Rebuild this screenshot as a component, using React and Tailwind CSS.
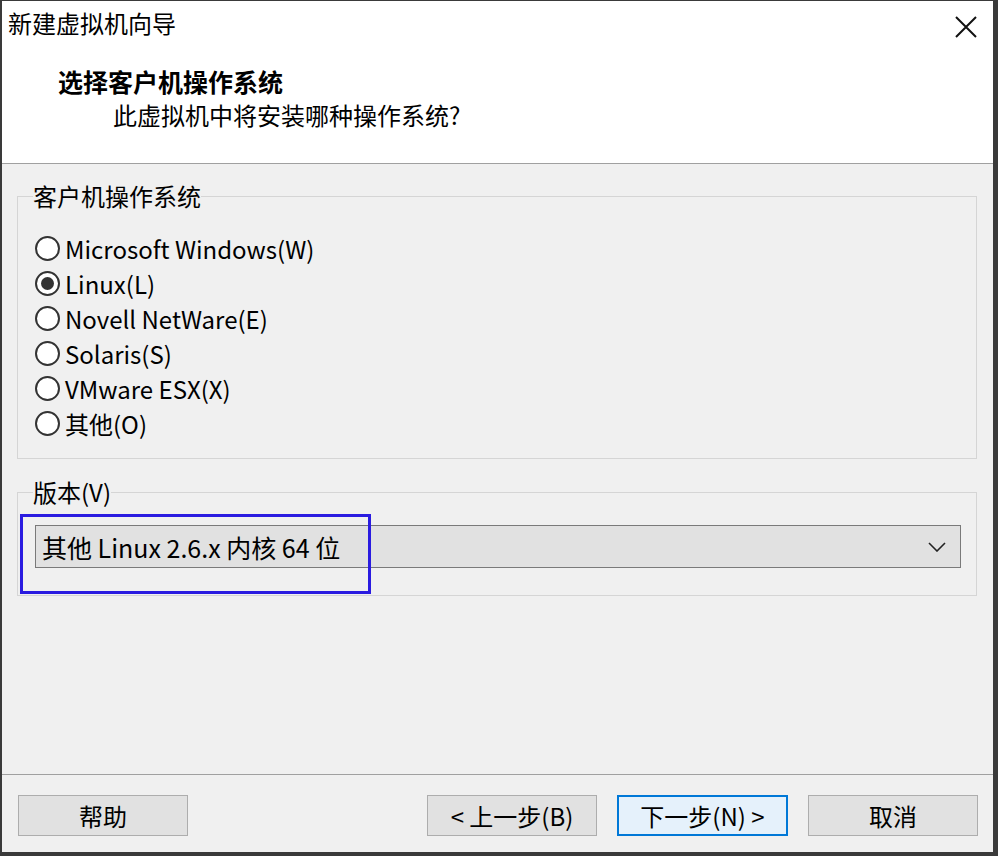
import React from 'react';

const osList = [
  { label: 'Microsoft Windows(W)', checked: false },
  { label: 'Linux(L)', checked: true },
  { label: 'Novell NetWare(E)', checked: false },
  { label: 'Solaris(S)', checked: false },
  { label: 'VMware ESX(X)', checked: false },
  { label: '其他(O)', checked: false },
];

function Radio({ checked }) {
  return (
    <span className="w-[25px] h-[25px] rounded-full border-2 border-[#333] bg-white flex items-center justify-center shrink-0">
      {checked && <span className="w-[13px] h-[13px] rounded-full bg-[#333]" />}
    </span>
  );
}

function Button({ children, isDefault }) {
  return (
    <button
      className={
        isDefault
          ? 'h-[41px] w-[171px] bg-[#e5f1fb] border-2 border-[#0078d7] text-[24px] leading-[30px] text-black'
          : 'h-[41px] w-[170px] bg-[#e1e1e1] border border-[#adadad] text-[24px] leading-[30px] text-black'
      }
    >
      {children}
    </button>
  );
}

export default function App() {
  return (
    <div className="w-[998px] h-[856px] flex flex-col bg-[#f0f0f0] border-l-2 border-r-[5px] border-b-4 border-t border-[#3a3a3a] font-['Noto_Sans_CJK_SC',sans-serif] text-black relative overflow-hidden">
      {/* Header */}
      <div className="h-[163px] bg-white border-b border-[#a0a0a0] shrink-0">
        <div className="flex items-start justify-between pl-[6px] pr-[16px] pt-[7px]">
          <span className="text-[24px] leading-[30px]">新建虚拟机向导</span>
          <svg width="22" height="22" viewBox="0 0 22 22" className="mt-[8px]">
            <path d="M1 1 L21 21 M21 1 L1 21" stroke="#111" strokeWidth="2" fill="none" />
          </svg>
        </div>
        <div className="pl-[56px] pt-[27px] text-[25px] leading-[32px] font-bold">选择客户机操作系统</div>
        <div className="pl-[111px] pt-[3px] text-[24px] leading-[30px]">此虚拟机中将安装哪种操作系统?</div>
      </div>

      {/* Content */}
      <div className="flex-1 pl-[15px] pr-[16px] pt-[17px]">
        <fieldset className="border border-[#d5d5d5] pl-[17px] pr-[16px] pb-[17px]">
          <legend className="px-0 -ml-[2px] text-[24px] leading-[30px]">客户机操作系统</legend>
          <div className="pt-[20px] flex flex-col">
            {osList.map((os) => (
              <label key={os.label} className="h-[35px] flex items-center gap-[5px] text-[24px] leading-[30px]">
                <Radio checked={os.checked} />
                <span>{os.label}</span>
              </label>
            ))}
          </div>
        </fieldset>

        <fieldset className="mt-[18px] border border-[#d5d5d5] pl-[17px] pr-[15px] pb-[27px] relative">
          <legend className="px-0 -ml-[2px] text-[24px] leading-[30px]">版本(V)</legend>
          <div className="mt-[18px] h-[43px] bg-[#e1e1e1] border border-[#7a7a7a] flex items-center justify-between pl-[6px] pr-[14px]">
            <span className="text-[25px] leading-[30px]">其他 Linux 2.6.x 内核 64 位</span>
            <svg width="18" height="10" viewBox="0 0 18 10">
              <path d="M1 1 L9 9 L17 1" stroke="#222" strokeWidth="1.6" fill="none" />
            </svg>
          </div>
          {/* annotation box */}
          <div className="absolute left-[2px] top-[7px] w-[351px] h-[80px] border-[3px] border-[#2a1be0] pointer-events-none" />
        </fieldset>
      </div>

      {/* Footer */}
      <div className="h-[78px] shrink-0 border-t border-[#a0a0a0] flex items-start pt-[20px] pl-[16px] pr-[15px]">
        <Button>帮助</Button>
        <div className="flex-1" />
        <div className="flex gap-[20px]">
          <Button>&lt; 上一步(B)</Button>
          <Button isDefault>下一步(N) &gt;</Button>
          <Button>取消</Button>
        </div>
      </div>
    </div>
  );
}
